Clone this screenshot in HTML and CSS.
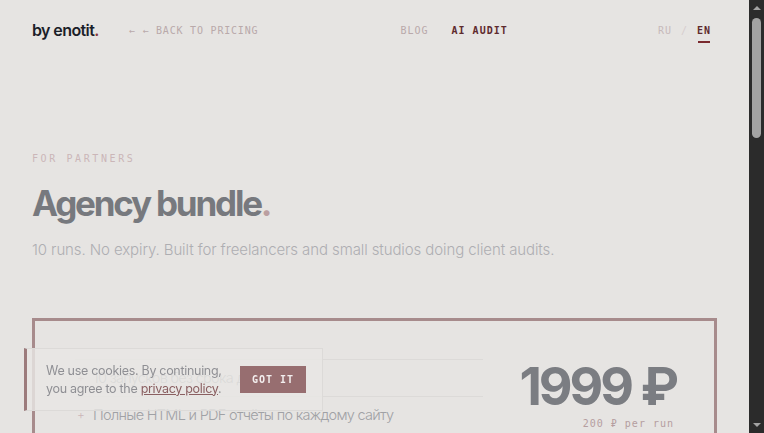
FILE: index.html
```html
<!DOCTYPE html>
<html lang="en">
  <head>
    <meta charset="UTF-8" />
    <meta name="viewport" content="width=device-width, initial-scale=1.0" />
    <title>Agency bundle — by enotit.</title>
    <link rel="stylesheet" href="styles.css">
  </head>
  <body>
    <header class="topbar">
      <div class="topbar-left">
        <a class="logo" href="#">by enotit<span>.</span></a>
        <a class="back-link" href="#">← ← BACK TO PRICING</a>
      </div>
      <nav class="topbar-nav">
        <a href="#">BLOG</a>
        <a class="active" href="#">AI AUDIT</a>
      </nav>
      <div class="lang">
        <a href="#">RU</a>
        <span class="lang-sep">/</span>
        <a class="active" href="#">EN</a>
      </div>
    </header>

    <main class="page">
      <section class="hero">
        <p class="eyebrow">FOR PARTNERS</p>
        <h1>Agency bundle<span>.</span></h1>
        <p class="lead">10 runs. No expiry. Built for freelancers and small studios doing client audits.</p>
      </section>

      <section class="bundle-card">
        <ul class="features">
          <li>10 запусков без срока действия</li>
          <li>Полные HTML и PDF отчёты по каждому сайту</li>
          <li>Приоритетная очередь обработки</li>
          <li>Поддержка по email</li>
        </ul>
        <div class="price">
          <div class="price-value">1999 ₽</div>
          <div class="price-note">200 ₽ per run</div>
        </div>
      </section>
    </main>

    <div class="cookie">
      <p>We use cookies. By continuing, you agree to the <a href="#">privacy policy</a>.</p>
      <button class="cookie-btn">GOT IT</button>
    </div>

    <!-- window scrollbar, as seen in the screenshot -->
    <div class="scrollbar" aria-hidden="true">
      <span class="sb-arrow up"></span>
      <span class="sb-thumb"></span>
      <span class="sb-arrow down"></span>
    </div>
  </body>
</html>
```

FILE: styles.css
```css
body {
  margin: 0 15px 0 0;
  background: #e6e4e2;
  color: #1b1e29;
  font-family: Inter, "Noto Sans", sans-serif;
}
a {
  text-decoration: none;
  color: inherit;
}
.topbar {
  height: 60px;
  display: flex;
  align-items: center;
  justify-content: space-between;
  padding: 0 38px 0 32px;
  font-family: "DejaVu Sans Mono", monospace;
  font-size: 10px;
  letter-spacing: 1px;
}
.topbar-left {
  display: flex;
  align-items: center;
  gap: 30px;
}
.logo {
  font-family: Inter, sans-serif;
  font-size: 16px;
  font-weight: 600;
  letter-spacing: -0.6px;
  color: #1b1e29;
}
.logo span {
  color: #8a3a3c;
}
.back-link {
  color: #b9a9aa;
  letter-spacing: 0.8px;
}
.topbar-nav {
  display: flex;
  gap: 23px;
  margin-right: 8px;
}
.topbar-nav a {
  color: #b9a9aa;
}
.topbar-nav a.active {
  color: #5e2a2e;
  font-weight: bold;
}
.lang {
  display: flex;
  gap: 9px;
  color: #c6b9ba;
}
.lang-sep {
  color: #d6cdce;
}
.lang a.active {
  color: #5e2a2e;
  font-weight: bold;
  position: relative;
}
.lang a.active::after {
  content: "";
  position: absolute;
  left: 1px;
  right: 1px;
  bottom: -7px;
  height: 2px;
  background: #7a2a2e;
}
.page {
  padding: 0 32px 200px;
}
.hero {
  padding-top: 93px;
}
.eyebrow {
  margin: 0;
  font-family: "DejaVu Sans Mono", monospace;
  font-size: 10px;
  letter-spacing: 2.6px;
  color: #cbb6b8;
}
.hero h1 {
  margin: 15px 0 0;
  font-size: 35px;
  font-weight: 700;
  letter-spacing: -2.2px;
  line-height: 48px;
  color: #77797e;
}
.hero h1 span {
  color: #bb9fa1;
}
.lead {
  margin: 13px 0 0;
  font-size: 15px;
  font-weight: 300;
  letter-spacing: -0.1px;
  color: #aeaeb2;
}
.bundle-card {
  margin-top: 59px;
  border: 3px solid #a78b8c;
  display: flex;
  justify-content: space-between;
  padding: 38px 38px 40px 40px;
}
.features {
  list-style: none;
  margin: 0;
  padding: 0;
  width: 408px;
  border-top: 1px solid #dcdad8;
}
.features li {
  position: relative;
  padding: 9px 0 9px 18px;
  font-size: 14.5px;
  font-weight: 300;
  line-height: 18px;
  letter-spacing: -0.7px;
  color: #a0a1a5;
  border-bottom: 1px solid #dcdad8;
}
.features li::before {
  content: "+";
  position: absolute;
  left: 2px;
  color: #cbb6b8;
  font-size: 12px;
}
.price {
  text-align: right;
  padding-top: 2px;
}
.price-value {
  font-size: 52px;
  font-weight: 700;
  line-height: 52px;
  letter-spacing: -3px;
  color: #7b7d82;
}
.price-note {
  margin-top: 5px;
  margin-right: 2px;
  font-family: "DejaVu Sans Mono", monospace;
  font-size: 10px;
  letter-spacing: 1px;
  color: #b59ea0;
}
.cookie {
  position: fixed;
  left: 24px;
  bottom: 22px;
  width: 276px;
  height: 61px;
  display: flex;
  align-items: center;
  gap: 18px;
  padding-left: 19px;
  background: rgba(232, 230, 228, 0.82);
  border: 1px solid #dcdad8;
  border-left: 3px solid #9c7b7c;
}
.cookie p {
  margin: 0;
  width: 176px;
  font-size: 12.5px;
  line-height: 18px;
  letter-spacing: -0.3px;
  color: #8f8f94;
}
.cookie p a {
  color: #8a5f61;
  text-decoration: underline;
}
.cookie-btn {
  width: 66px;
  height: 27px;
  border: none;
  background: #976e70;
  color: #f3eeee;
  font-family: "DejaVu Sans Mono", monospace;
  font-size: 10px;
  font-weight: bold;
  letter-spacing: 1px;
  padding: 0;
  cursor: pointer;
}
.scrollbar {
  position: fixed;
  top: 0;
  right: 0;
  bottom: 0;
  width: 15px;
  background: #2b2b2b;
  display: flex;
  flex-direction: column;
  align-items: center;
}
.sb-arrow {
  width: 0;
  height: 0;
  border-left: 4px solid transparent;
  border-right: 4px solid transparent;
}
.sb-arrow.up {
  margin-top: 6px;
  border-bottom: 4px solid #a3a3a3;
}
.sb-arrow.down {
  margin-top: auto;
  margin-bottom: 6px;
  border-top: 4px solid #a3a3a3;
}
.sb-thumb {
  margin-top: 8px;
  width: 9px;
  height: 120px;
  border-radius: 5px;
  background: #a3a3a3;
}
```
